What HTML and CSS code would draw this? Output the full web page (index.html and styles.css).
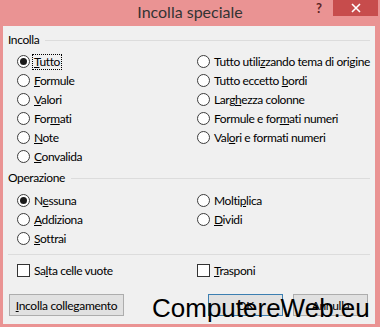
FILE: index.html
```html
<!DOCTYPE html>
<html>
<head>
<meta charset="utf-8">
<link rel="stylesheet" href="styles.css">
</head>
<body>
<div class="window">
  <div class="titlebar">
    <span class="title">Incolla speciale</span>
    <span class="help">?</span>
    <span class="close">
      <svg width="10" height="10" viewBox="0 0 10 10"><path d="M1 1 L9 9 M9 1 L1 9" stroke="#fff" stroke-width="1.6"/></svg>
    </span>
  </div>
  <div class="client">
    <div class="group-label"><span>Incolla</span><i class="rule"></i></div>
    <div class="grid grid-paste">
      <label class="opt"><span class="radio on"></span><span class="focus"><u>T</u>utto</span></label>
      <label class="opt"><span class="radio"></span><span>Tutto utili<u>z</u>zando tema di origine</span></label>
      <label class="opt"><span class="radio"></span><span><u>F</u>ormule</span></label>
      <label class="opt"><span class="radio"></span><span>Tutto eccetto <u>b</u>ordi</span></label>
      <label class="opt"><span class="radio"></span><span><u>V</u>alori</span></label>
      <label class="opt"><span class="radio"></span><span>Larg<u>h</u>ezza colonne</span></label>
      <label class="opt"><span class="radio"></span><span>For<u>m</u>ati</span></label>
      <label class="opt"><span class="radio"></span><span>Formule e for<u>m</u>ati numeri</span></label>
      <label class="opt"><span class="radio"></span><span><u>N</u>ote</span></label>
      <label class="opt"><span class="radio"></span><span>Val<u>o</u>ri e formati numeri</span></label>
      <label class="opt"><span class="radio"></span><span><u>C</u>onvalida</span></label>
    </div>
    <div class="group-label second"><span>Operazione</span><i class="rule"></i></div>
    <div class="grid grid-op">
      <label class="opt"><span class="radio on"></span><span>N<u>e</u>ssuna</span></label>
      <label class="opt"><span class="radio"></span><span>Molti<u>p</u>lica</span></label>
      <label class="opt"><span class="radio"></span><span><u>A</u>ddiziona</span></label>
      <label class="opt"><span class="radio"></span><span><u>D</u>ividi</span></label>
      <label class="opt"><span class="radio"></span><span><u>S</u>ottrai</span></label>
    </div>
    <div class="sep"></div>
    <div class="grid grid-check">
      <label class="opt"><span class="check"></span><span>Sa<u>l</u>ta celle vuote</span></label>
      <label class="opt"><span class="check"></span><span><u>T</u>rasponi</span></label>
    </div>
    <div class="buttons">
      <button class="btn link"><u>I</u>ncolla collegamento</button>
      <span class="spacer"></span>
      <button class="btn ok">OK</button>
      <button class="btn">Annulla</button>
    </div>
  </div>
  <div class="watermark">ComputereWeb.eu</div>
</div>
</body>
</html>
```
FILE: styles.css
```css
* { box-sizing: border-box; }
html, body { margin: 0; padding: 0; }
body {
  width: 380px;
  height: 327px;
  background: #ea9393;
  font-family: "Lato", "Open Sans", sans-serif;
  font-size: 12px;
  letter-spacing: -0.4px;
  color: #000;
  overflow: hidden;
}
.window {
  position: relative;
  width: 380px;
  height: 327px;
  display: flex;
  flex-direction: column;
}
.titlebar {
  position: relative;
  height: 26px;
  display: flex;
  align-items: center;
  justify-content: center;
}
.title {
  font-size: 16px;
  letter-spacing: 0;
  color: #333;
  margin-top: -3px;
}
.help {
  position: absolute;
  left: 316px;
  top: 0;
  font-size: 13px;
  font-weight: bold;
  letter-spacing: 0;
  color: #5b2323;
  line-height: 16px;
}
.close {
  position: absolute;
  left: 333px;
  top: 0;
  width: 45px;
  height: 16px;
  background: #c74c4c;
  display: flex;
  align-items: center;
  justify-content: center;
}
.close svg { display: block; }
.client {
  margin: 0 5px 3px 3px;
  height: 298px;
  background: #f0f0f0;
  padding: 6px 5px 0 5px;
  display: flex;
  flex-direction: column;
}
.group-label {
  display: flex;
  align-items: center;
  height: 16px;
  line-height: 16px;
}
.group-label .rule {
  flex: 1;
  height: 1px;
  background: #dcdcdc;
  margin-left: 6px;
  margin-top: 1px;
}
.group-label.second { margin-top: 4px; }
.grid {
  display: grid;
  grid-template-columns: 180px 1fr;
  grid-auto-rows: 19px;
  padding-left: 9px;
}
.grid-paste { margin-top: 4px; }
.grid-op { margin-top: 5px; }
.opt {
  display: flex;
  align-items: center;
  white-space: nowrap;
}
.radio {
  width: 13px;
  height: 13px;
  border-radius: 50%;
  border: 1px solid #3c3c3c;
  background: #fff;
  margin-right: 4px;
  flex: none;
  display: flex;
  align-items: center;
  justify-content: center;
}
.radio.on::after {
  content: "";
  width: 7px;
  height: 7px;
  border-radius: 50%;
  background: #1a1a1a;
}
.focus {
  outline: 1px dotted #000;
  padding: 0 1px;
  margin-left: -1px;
  line-height: 14px;
}
.sep {
  height: 1px;
  background: #dcdcdc;
  margin-top: 6px;
}
.grid-check {
  margin-top: 6px;
  grid-auto-rows: 18px;
}
.check {
  width: 13px;
  height: 13px;
  border: 1px solid #333;
  background: #fff;
  margin-right: 4px;
  flex: none;
}
.buttons {
  display: flex;
  margin-top: 15px;
  padding-left: 1px;
  padding-right: 2px;
  gap: 10px;
}
.spacer { flex: 1; }
.btn {
  height: 22px;
  width: 75px;
  background: #e1e1e1;
  border: 1px solid #adadad;
  font-family: inherit;
  font-size: 12px;
  letter-spacing: -0.3px;
  color: #000;
  padding: 0;
  white-space: nowrap;
}
.btn.link { width: 115px; }
.btn.ok { border-color: #3c7fb1; }
.watermark {
  position: absolute;
  left: 152px;
  top: 295px;
  font-family: "Liberation Sans", Arial, sans-serif;
  font-size: 26px;
  line-height: 26px;
  letter-spacing: 0;
  color: #000;
  white-space: nowrap;
}
```
